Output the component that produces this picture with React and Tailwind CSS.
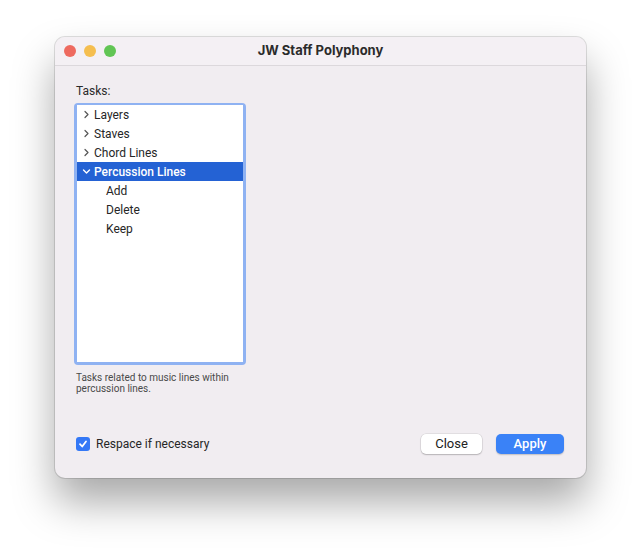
const tasks = [
  { label: "Layers", open: false },
  { label: "Staves", open: false },
  { label: "Chord Lines", open: false },
  { label: "Percussion Lines", open: true, selected: true, children: ["Add", "Delete", "Keep"] },
];

const Chevron = ({ open, color }) => (
  <svg width="9" height="9" viewBox="0 0 9 9" className="shrink-0">
    {open ? (
      <path d="M1.5 3 L4.5 6 L7.5 3" fill="none" stroke={color} strokeWidth="1.4" strokeLinecap="round" strokeLinejoin="round" />
    ) : (
      <path d="M3 1.5 L6 4.5 L3 7.5" fill="none" stroke={color} strokeWidth="1.2" strokeLinecap="round" strokeLinejoin="round" />
    )}
  </svg>
);

const TaskRow = ({ task }) => (
  <>
    <div
      className={`flex h-[19px] items-center gap-[3px] pl-[5px] ${
        task.selected ? "bg-[#2462d4] font-medium text-white" : "text-[#262626]"
      }`}
    >
      <Chevron open={task.open} color={task.selected ? "#ffffff" : "#555555"} />
      <span>{task.label}</span>
    </div>
    {task.open &&
      task.children.map((child) => (
        <div key={child} className="flex h-[19px] items-center pl-[29px] text-[#262626]">
          {child}
        </div>
      ))}
  </>
);

export default function App() {
  return (
    <div className="h-[552px] w-[641px] bg-white pl-[55px] pt-[37px]" style={{ fontFamily: "Roboto, 'Noto Sans', sans-serif" }}>
      <div className="flex h-[441px] w-[531px] flex-col overflow-hidden rounded-[10px] bg-[#f1edf1] shadow-[0_0_0_1px_rgba(0,0,0,0.12),0_24px_42px_rgba(0,0,0,0.34)]">
        <div className="relative flex h-[29px] items-center justify-center border-b border-[#dcd8dc] bg-[#f4f0f4]">
          <div className="absolute left-[9px] top-[8px] flex gap-[8px]">
            <span className="h-[12px] w-[12px] rounded-full bg-[#ee6a5f]" />
            <span className="h-[12px] w-[12px] rounded-full bg-[#f5be4f]" />
            <span className="h-[12px] w-[12px] rounded-full bg-[#61c554]" />
          </div>
          <span className="text-[13px] font-bold text-[#2b2b2b]" style={{ fontFamily: "Inter, sans-serif" }}>
            JW Staff Polyphony
          </span>
        </div>

        <div className="flex flex-1 flex-col px-[19px] pt-[18px] pb-[24px]">
          <div className="ml-[2px] text-[12px] leading-[15px] text-[#2a2a2a]">Tasks:</div>
          <div className="mt-[4px] h-[262px] w-[172px] rounded-[4px] bg-[#8fb2f2] p-[3px] pt-[2px]">
            <div className="h-full bg-white text-[12px]">
              {tasks.map((task) => (
                <TaskRow key={task.label} task={task} />
              ))}
            </div>
          </div>
          <div className="ml-[2px] mt-[7px] text-[10px] leading-[11px] text-[#4a4a4a]">
            Tasks related to music lines within
            <br />
            percussion lines.
          </div>

          <div className="mt-auto flex items-center">
            <label className="ml-[2px] flex items-center gap-[6px] text-[12px] text-[#262626]">
              <span className="flex h-[14px] w-[14px] items-center justify-center rounded-[3px] bg-[#3478f6]">
                <svg width="10" height="10" viewBox="0 0 10 10">
                  <path d="M2 5.2 L4.2 7.5 L8 2.5" fill="none" stroke="white" strokeWidth="1.8" strokeLinecap="round" strokeLinejoin="round" />
                </svg>
              </span>
              Respace if necessary
            </label>
            <div className="ml-auto flex gap-[14px] pr-[3px]">
              <button className="h-[20px] w-[61px] rounded-[5px] bg-white text-[13px] text-[#222] shadow-[0_0_0_0.5px_rgba(0,0,0,0.12),0_1px_1.5px_rgba(0,0,0,0.2)]">
                Close
              </button>
              <button className="h-[20px] w-[68px] rounded-[5px] bg-[#3a82f7] text-[13px] font-medium text-white shadow-[0_1px_1.5px_rgba(0,0,0,0.2)]">
                Apply
              </button>
            </div>
          </div>
        </div>
      </div>
    </div>
  );
}
